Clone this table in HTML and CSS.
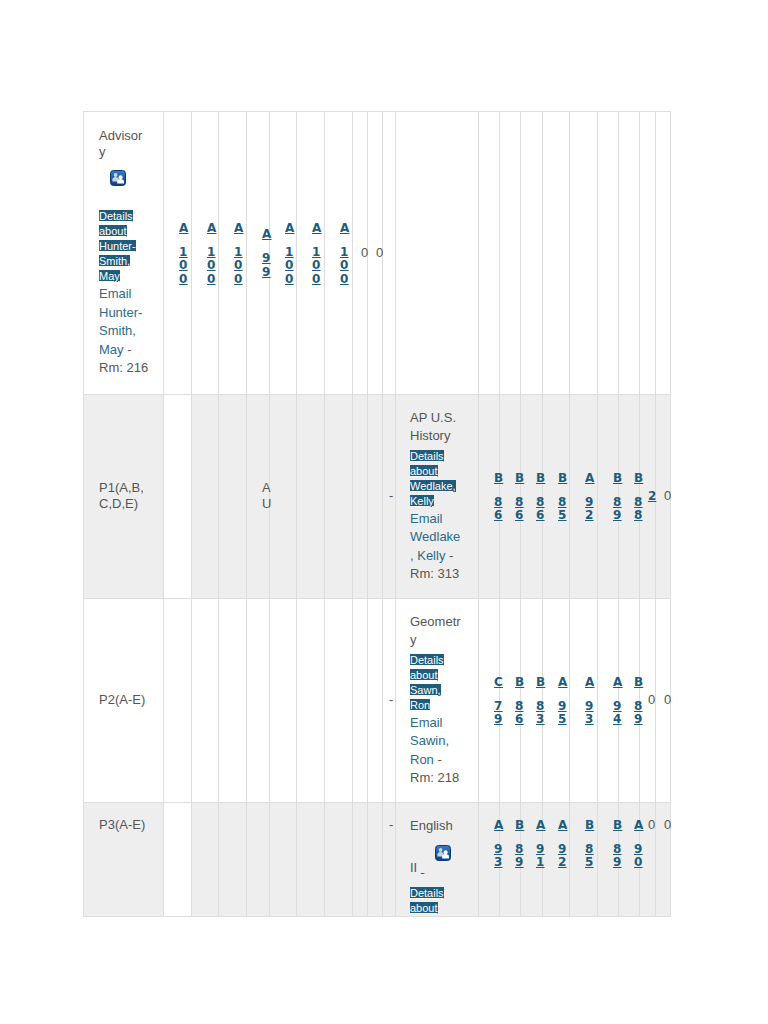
FILE: index.html
```html
<!DOCTYPE html>
<html lang="en">
<head>
<meta charset="utf-8">
<title>Grades</title>
<link rel="stylesheet" href="styles.css">
</head>
<body>
<div class="page">
  <div class="clip">
    <table class="grades">
      <colgroup>
        <col class="w80"><col class="w28"><col class="w27"><col class="w28"><col class="w23"><col class="w27"><col class="w28"><col class="w28"><col class="w15"><col class="w15"><col class="w13"><col class="w83"><col class="w21"><col class="w21"><col class="w22"><col class="w27"><col class="w28"><col class="w21"><col class="w21"><col class="w16"><col class="w15">
      </colgroup>
      <tbody>
        <tr class="r1">
          <td class="per">Advisory<br><a class="ico" href="#"><svg class="icon" width="16" height="16" viewBox="0 0 16 16"><defs><linearGradient id="ig1" x1="0" y1="0" x2="0" y2="1"><stop offset="0" stop-color="#3a7cc4"/><stop offset="1" stop-color="#0f3f7c"/></linearGradient></defs><rect x="0.5" y="0.5" width="15" height="15" rx="3" fill="url(#ig1)" stroke="#0d3a73"/><circle cx="5.6" cy="5" r="1.9" fill="#c7d2df"/><path d="M2.4 11.5v-2.2c0-1.5 1.4-2.4 3.2-2.4s3.2 0.9 3.2 2.4v2.2z" fill="#c7d2df"/><circle cx="10.6" cy="7.3" r="2" fill="#fff"/><path d="M7.2 13.6v-2.1c0-1.6 1.5-2.5 3.4-2.5s3.4 0.9 3.4 2.5v2.1z" fill="#fff"/></svg></a>
            <div class="det after"><a class="hl" href="#">Details about Hunter-Smith, May</a></div>
            <div class="mail"><a href="#">Email Hunter-Smith, May</a> - Rm: 216</div>
          </td>
          <td class="g"><a class="gr" href="#"><span class="lt">A</span><span class="sc">100</span></a></td>
          <td class="g"><a class="gr" href="#"><span class="lt">A</span><span class="sc">100</span></a></td>
          <td class="g"><a class="gr" href="#"><span class="lt">A</span><span class="sc">100</span></a></td>
          <td class="g"><a class="gr" href="#"><span class="lt">A</span><span class="sc">99</span></a></td>
          <td class="g"><a class="gr" href="#"><span class="lt">A</span><span class="sc">100</span></a></td>
          <td class="g"><a class="gr" href="#"><span class="lt">A</span><span class="sc">100</span></a></td>
          <td class="g"><a class="gr" href="#"><span class="lt">A</span><span class="sc">100</span></a></td>
          <td class="n">0</td>
          <td class="n">0</td>
          <td class="d"></td>
          <td class="cls"></td>
          <td class="g"></td><td class="g"></td><td class="g"></td><td class="g"></td><td class="g"></td><td class="g"></td><td class="g"></td>
          <td class="n"></td>
          <td class="n"></td>
        </tr>
        <tr class="alt">
          <td class="per">P1(A,B,C,D,E)</td>
          <td class="g w"></td>
          <td class="g"></td>
          <td class="g"></td>
          <td class="g">AU</td>
          <td class="g"></td>
          <td class="g"></td>
          <td class="g"></td>
          <td class="n"></td>
          <td class="n"></td>
          <td class="d">-</td>
          <td class="cls">
            <div class="cname">AP U.S. History</div>
            <div class="det"><a class="hl" href="#">Details about Wedlake, Kelly</a></div>
            <div class="mail"><a href="#">Email Wedlake, Kelly</a> - Rm: 313</div>
          </td>
          <td class="g"><a class="gr" href="#"><span class="lt">B</span><span class="sc">86</span></a></td>
          <td class="g"><a class="gr" href="#"><span class="lt">B</span><span class="sc">86</span></a></td>
          <td class="g"><a class="gr" href="#"><span class="lt">B</span><span class="sc">86</span></a></td>
          <td class="g"><a class="gr" href="#"><span class="lt">B</span><span class="sc">85</span></a></td>
          <td class="g"><a class="gr" href="#"><span class="lt">A</span><span class="sc">92</span></a></td>
          <td class="g"><a class="gr" href="#"><span class="lt">B</span><span class="sc">89</span></a></td>
          <td class="g"><a class="gr" href="#"><span class="lt">B</span><span class="sc">88</span></a></td>
          <td class="n"><a class="cnt" href="#">2</a></td>
          <td class="n">0</td>
        </tr>
        <tr>
          <td class="per">P2(A-E)</td>
          <td class="g"></td>
          <td class="g"></td>
          <td class="g"></td>
          <td class="g"></td>
          <td class="g"></td>
          <td class="g"></td>
          <td class="g"></td>
          <td class="n"></td>
          <td class="n"></td>
          <td class="d">-</td>
          <td class="cls">
            <div class="cname">Geometry</div>
            <div class="det"><a class="hl" href="#">Details about Sawn, Ron</a></div>
            <div class="mail"><a href="#">Email Sawin, Ron</a> - Rm: 218</div>
          </td>
          <td class="g"><a class="gr" href="#"><span class="lt">C</span><span class="sc">79</span></a></td>
          <td class="g"><a class="gr" href="#"><span class="lt">B</span><span class="sc">86</span></a></td>
          <td class="g"><a class="gr" href="#"><span class="lt">B</span><span class="sc">83</span></a></td>
          <td class="g"><a class="gr" href="#"><span class="lt">A</span><span class="sc">95</span></a></td>
          <td class="g"><a class="gr" href="#"><span class="lt">A</span><span class="sc">93</span></a></td>
          <td class="g"><a class="gr" href="#"><span class="lt">A</span><span class="sc">94</span></a></td>
          <td class="g"><a class="gr" href="#"><span class="lt">B</span><span class="sc">89</span></a></td>
          <td class="n">0</td>
          <td class="n">0</td>
        </tr>
        <tr class="alt cut">
          <td class="per">P3(A-E)</td>
          <td class="g w"></td>
          <td class="g"></td>
          <td class="g"></td>
          <td class="g"></td>
          <td class="g"></td>
          <td class="g"></td>
          <td class="g"></td>
          <td class="n"></td>
          <td class="n"></td>
          <td class="d">-</td>
          <td class="cls">
            <div class="cname">English II <a class="ico" href="#">&nbsp;<svg class="icon" width="16" height="16" viewBox="0 0 16 16"><defs><linearGradient id="ig2" x1="0" y1="0" x2="0" y2="1"><stop offset="0" stop-color="#3a7cc4"/><stop offset="1" stop-color="#0f3f7c"/></linearGradient></defs><rect x="0.5" y="0.5" width="15" height="15" rx="3" fill="url(#ig2)" stroke="#0d3a73"/><circle cx="5.6" cy="5" r="1.9" fill="#c7d2df"/><path d="M2.4 11.5v-2.2c0-1.5 1.4-2.4 3.2-2.4s3.2 0.9 3.2 2.4v2.2z" fill="#c7d2df"/><circle cx="10.6" cy="7.3" r="2" fill="#fff"/><path d="M7.2 13.6v-2.1c0-1.6 1.5-2.5 3.4-2.5s3.4 0.9 3.4 2.5v2.1z" fill="#fff"/></svg></a></div>
            <div class="det after"><a class="hl" href="#">Details about</a></div>
          </td>
          <td class="g"><a class="gr" href="#"><span class="lt">A</span><span class="sc">93</span></a></td>
          <td class="g"><a class="gr" href="#"><span class="lt">B</span><span class="sc">89</span></a></td>
          <td class="g"><a class="gr" href="#"><span class="lt">A</span><span class="sc">91</span></a></td>
          <td class="g"><a class="gr" href="#"><span class="lt">A</span><span class="sc">92</span></a></td>
          <td class="g"><a class="gr" href="#"><span class="lt">B</span><span class="sc">85</span></a></td>
          <td class="g"><a class="gr" href="#"><span class="lt">B</span><span class="sc">89</span></a></td>
          <td class="g"><a class="gr" href="#"><span class="lt">A</span><span class="sc">90</span></a></td>
          <td class="n">0</td>
          <td class="n">0</td>
        </tr>
      </tbody>
    </table>
  </div>
</div>
</body>
</html>
```
FILE: styles.css
```css
body {
  margin: 8px;
  background: #fff;
  color: #555;
  font-family: "Liberation Sans", Arial, sans-serif;
  font-size: 13px;
}

.page {
  padding: 103px 0 0 75px;
}

.clip {
  width: 588px;
  height: 805px;
  overflow: hidden;
  border-bottom: 1px solid #ddd;
}

.grades {
  border-collapse: collapse;
  table-layout: fixed;
  width: 588px;
}

.w80 { width: 80px; }
.w28 { width: 28px; }
.w27 { width: 27px; }
.w23 { width: 23px; }
.w22 { width: 22px; }
.w21 { width: 21px; }
.w16 { width: 16px; }
.w15 { width: 15px; }
.w13 { width: 13px; }
.w83 { width: 83px; }

.grades td {
  border: 1px solid #ddd;
  padding: 14px 14px 14px 15px;
  vertical-align: middle;
  line-height: 16px;
  overflow-wrap: anywhere;
  background: #fff;
}

.grades td.per {
  padding-right: 14.5px;
}

.grades tr.r1 td {
  padding-top: 16px;
  padding-bottom: 16px;
}

.grades tr.alt td {
  background: #eee;
}

.grades tr.alt td.w {
  background: #fff;
}

.grades tr.cut td {
  vertical-align: top;
}

.grades td.n {
  padding-left: 8px;
  padding-right: 0;
}

.grades td.d {
  padding-left: 6px;
  padding-right: 0;
}

.grades td.cls {
  padding-left: 14px;
  padding-right: 15px;
}

.cname {
  line-height: 18.5px;
}

.ico {
  color: #2d6b8a;
  text-decoration: underline;
}

.icon {
  display: inline-block;
  vertical-align: baseline;
  margin: 10px 0 11px 11px;
}

.det {
  font-size: 11px;
  line-height: 15px;
  margin: 3px 0 1px;
}

.det.after {
  margin-top: 8px;
}

.hl {
  background: #1f5b7b;
  color: #fff;
  text-decoration: underline;
}

.mail {
  line-height: 18.5px;
}

.mail a {
  color: #2d6b8a;
  text-decoration: none;
}

.gr {
  display: block;
  color: #1d5c7d;
  font-family: "DejaVu Sans", Verdana, sans-serif;
  font-weight: bold;
  font-size: 12px;
  text-decoration: underline;
}

.lt {
  display: block;
  line-height: 16px;
  text-decoration: underline;
}

.sc {
  display: block;
  line-height: 13.5px;
  margin-top: 10px;
  text-decoration: underline;
}

.cnt {
  color: #1d5c7d;
  font-family: "DejaVu Sans", Verdana, sans-serif;
  font-weight: bold;
  font-size: 12px;
  text-decoration: underline;
}
```
